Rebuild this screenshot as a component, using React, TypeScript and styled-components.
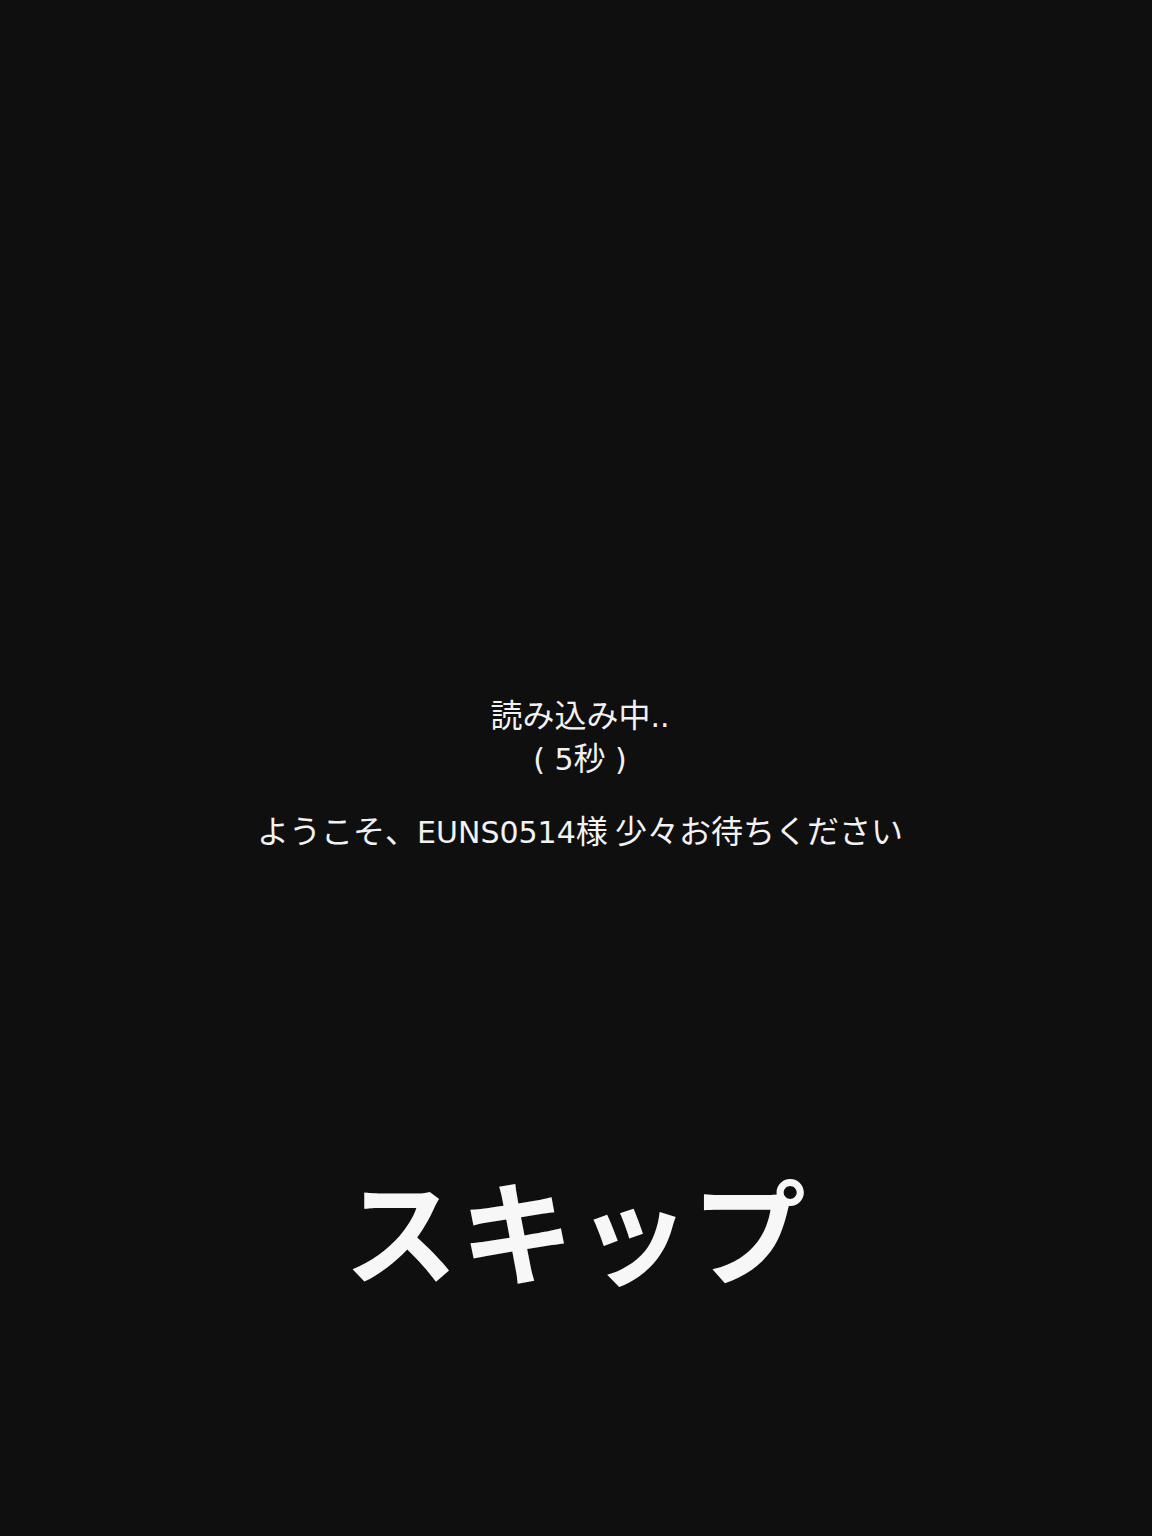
import React from "react";
import styled, { createGlobalStyle } from "styled-components";

const Global = createGlobalStyle`
  html, body { margin: 0; padding: 0; background: #0f0f0f; }
  body { font-family: "Noto Sans CJK JP", "Noto Sans", sans-serif; }
`;

const Screen = styled.main`
  min-height: 1536px;
  background: #0f0f0f;
  color: #f2f2f2;
  display: flex;
  flex-direction: column;
  align-items: center;
  padding-top: 695px;
  box-sizing: border-box;
`;

const Status = styled.section`
  display: flex;
  flex-direction: column;
  align-items: center;
  font-family: "DejaVu Sans", "Noto Sans CJK JP", sans-serif;
  font-size: 30px;
  line-height: 43px;
  padding-left: 8px;
`;

const Line = styled.div<{ $gap?: number }>`
  margin-top: ${(p) => p.$gap ?? 0}px;
  height: 43px;
  white-space: nowrap;
`;

const Jp = styled.span`
  font-family: "Noto Sans CJK JP", sans-serif;
  font-size: 32px;
  line-height: 1;
`;

const Skip = styled.button`
  margin-top: 304px;
  background: none;
  border: none;
  padding: 0;
  color: #f7f7f7;
  font-family: "Noto Sans CJK JP", sans-serif;
  font-weight: 600;
  font-size: 114px;
  line-height: 138px;
  letter-spacing: 2px;
  cursor: pointer;
`;

export default function App() {
  return (
    <>
      <Global />
      <Screen>
        <Status>
          <Line>
            <Jp>読み込み中</Jp>..
          </Line>
          <Line>
            ( 5<Jp>秒</Jp> )
          </Line>
          <Line $gap={30}>
            <Jp>ようこそ、</Jp>EUNS0514<Jp>様 少々お待ちください</Jp>
          </Line>
        </Status>
        <Skip>スキップ</Skip>
      </Screen>
    </>
  );
}
